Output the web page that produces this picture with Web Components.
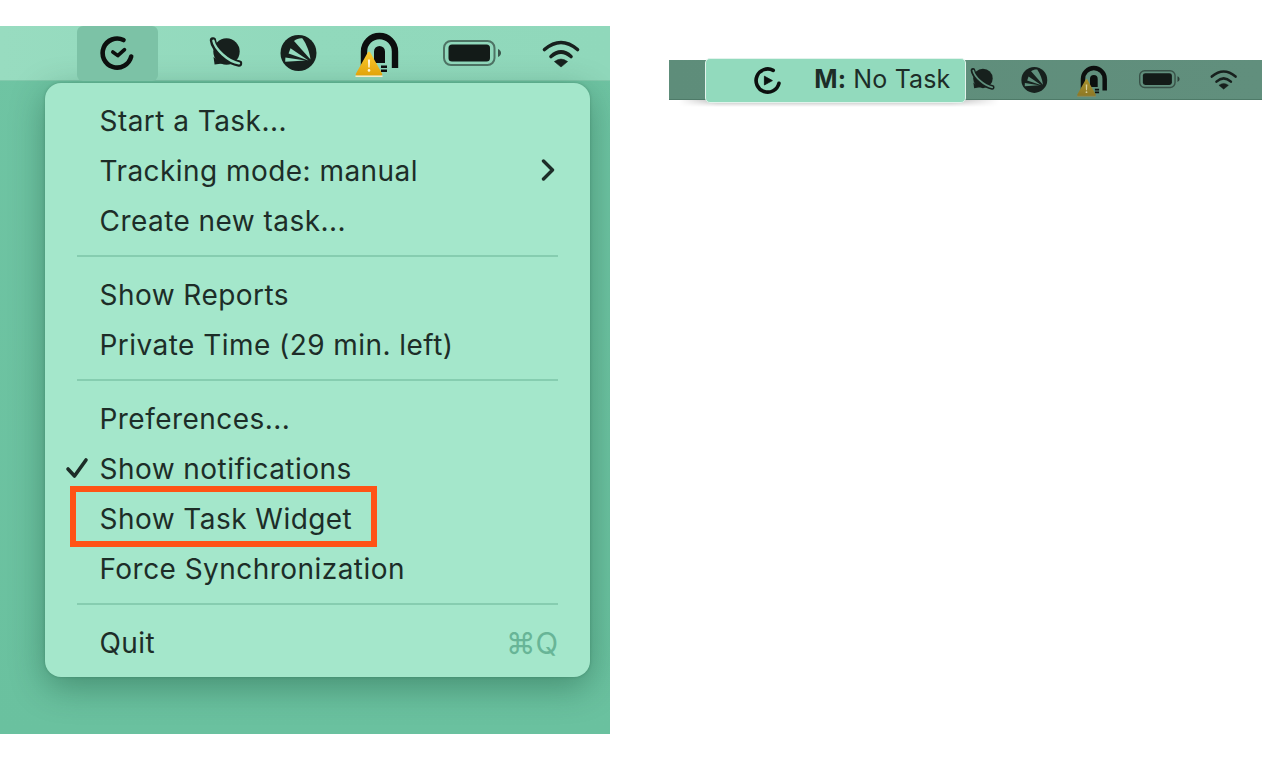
<!DOCTYPE html>
<html lang="en">
<head>
<meta charset="utf-8">
<title>Task widget</title>
<style>
  html, body { margin: 0; background: #fff; }
  body { width: 1270px; height: 760px; overflow: hidden; font-family: Inter, "Liberation Sans", sans-serif; color: #1d2d28; }
  #stage { display: flex; align-items: flex-start; gap: 59px; padding-top: 26px; }
</style>
</head>
<body>
<div id="stage">
  <desktop-panel>
    <menu-bar slot="bar"></menu-bar>
    <app-menu slot="menu">
      <menu-row>Start a Task...</menu-row>
      <menu-row arrow>Tracking mode: manual</menu-row>
      <menu-row>Create new task...</menu-row>
      <menu-sep></menu-sep>
      <menu-row>Show Reports</menu-row>
      <menu-row>Private Time (29 min. left)</menu-row>
      <menu-sep></menu-sep>
      <menu-row>Preferences...</menu-row>
      <menu-row checked>Show notifications</menu-row>
      <menu-row marked>Show Task Widget</menu-row>
      <menu-row>Force Synchronization</menu-row>
      <menu-sep></menu-sep>
      <menu-row shortcut="⌘Q">Quit</menu-row>
    </app-menu>
  </desktop-panel>
  <widget-bar></widget-bar>
</div>

<script>
  const ICONS = {
    tick: {
      w: 34, h: 34,
      svg: `<path d="M23.5 4A14.5 14.5 0 1 0 31.2 20.5" fill="none" stroke="#0c0f0e" stroke-width="4.6" stroke-linecap="round"/>
            <path d="M12.8 16l5 3.6 6.7-6" fill="none" stroke="#0c0f0e" stroke-width="3.6" stroke-linecap="round" stroke-linejoin="round"/>`
    },
    play: {
      w: 34, h: 34,
      svg: `<path d="M24 4.2A14.5 14.5 0 1 0 31.2 20.5" fill="none" stroke="#0c0f0e" stroke-width="4.6" stroke-linecap="round"/>
            <path d="M13 11.5L23 17 13 22.5z" fill="#0c0f0e" stroke="#0c0f0e" stroke-width="1" stroke-linejoin="round"/>`
    },
    planet: {
      w: 34, h: 33,
      svg: `<circle cx="17.5" cy="15.5" r="13.2" fill="#17201d"/>
            <path d="M4.5 21L5.6 28.6 13.5 27.5z" fill="#17201d"/>
            <path d="M4 4.5C5 13 19 26 30 27.5" fill="none" stroke="#17201d" stroke-width="6.4" stroke-linecap="round"/>
            <path d="M4.4 4.8C6 13 19 25.6 30 27.4" fill="none" stroke="var(--gap)" stroke-width="2.4" stroke-linecap="round"/>`
    },
    spark: {
      w: 37, h: 36,
      svg: `<circle cx="18.5" cy="18" r="18" fill="#17201d"/>
            <path d="M30.5 24.5L14 6C16.5 3.8 20 3 22.5 3.4 26.5 9 29.5 17 30.5 24.5z" fill="var(--gap)"/>
            <path d="M28.5 25.5L10.5 13.2 8.6 18.6z" fill="var(--gap)"/>
            <path d="M25.5 25.5L5.4 22.4 5.2 26.8z" fill="var(--gap)"/>`
    },
    lock: {
      w: 46, h: 44,
      svg: `<defs><linearGradient id="warn" x1="0" y1="0" x2="0" y2="1"><stop offset="0" stop-color="var(--warn-a)"/><stop offset="1" stop-color="var(--warn-b)"/></linearGradient></defs>
            <path d="M10 36V18.5a15.5 15.5 0 0 1 31 0V35" fill="none" stroke="#0c0f0e" stroke-width="6.4"/>
            <path d="M20 30V18.5a5.5 5.5 0 0 1 11 0V30z" fill="#0c0f0e"/>
            <path d="M27 32.5h6v2.4h-6zM27 36.5h6v2.4h-6z" fill="#0c0f0e"/>
            <path d="M15 20L3 41.5h24z" fill="url(#warn)" stroke="url(#warn)" stroke-width="2.6" stroke-linejoin="round"/>
            <path d="M2 43.2h26" fill="none" stroke="var(--warn-edge)" stroke-width="1.4" stroke-linecap="round"/>
            <path d="M13.9 26.5h2.2l-.4 8h-1.4z" fill="var(--warn-mark)"/>
            <circle cx="15" cy="37.4" r="1.3" fill="var(--warn-mark)"/>`
    },
    battery: {
      w: 58, h: 26,
      svg: `<rect x="1" y="1" width="50.5" height="24" rx="7" fill="none" stroke="#17201d" stroke-opacity=".55" stroke-width="2"/>
            <rect x="5.5" y="4.5" width="41.5" height="17" rx="3.5" fill="#131b18"/>
            <path d="M55 9c2 .8 3 2.3 3 4s-1 3.2-3 4z" fill="#17201d" fill-opacity=".7"/>`
    },
    wifi: {
      w: 38, h: 28,
      svg: `<path d="M2.5 10.5Q19-3.5 35.5 10.5" fill="none" stroke="#17201d" stroke-width="3.6" stroke-linecap="round"/>
            <path d="M9 17.5Q19 8.5 29 17.5" fill="none" stroke="#17201d" stroke-width="3.6" stroke-linecap="round"/>
            <path d="M12.4 22.6Q19 17.6 25.6 22.6L19 28z" fill="#17201d" stroke="#17201d" stroke-width=".6" stroke-linejoin="round"/>`
    }
  };

  class TrayIcon extends HTMLElement {
    constructor() {
      super();
      this.attachShadow({ mode: 'open' });
    }

    connectedCallback() {
      const icon = ICONS[this.getAttribute('name')];
      const scale = parseFloat(this.getAttribute('scale') || '1');
      this.shadowRoot.innerHTML = `
        <style>
          :host { display: block; flex: none; line-height: 0; }
          svg { display: block; overflow: visible; }
        </style>
        <svg width="${icon.w * scale}" height="${icon.h * scale}" viewBox="0 0 ${icon.w} ${icon.h}">${icon.svg}</svg>
      `;
    }
  }
  customElements.define('tray-icon', TrayIcon);

  class DesktopPanel extends HTMLElement {
    constructor() {
      super();
      this.attachShadow({ mode: 'open' }).innerHTML = `
        <style>
          :host {
            display: block;
            flex: none;
            width: 610px;
            height: 708px;
            overflow: hidden;
            background: linear-gradient(180deg, #6fc4a3 0%, #6ac19f 100%);
          }
        </style>
        <slot name="bar"></slot>
        <slot name="menu"></slot>
      `;
    }
  }
  customElements.define('desktop-panel', DesktopPanel);

  class MenuBar extends HTMLElement {
    constructor() {
      super();
      this.attachShadow({ mode: 'open' }).innerHTML = `
        <style>
          :host {
            --gap: #93dabd;
            --warn-a: #f9ca2e;
            --warn-b: #e3a50c;
            --warn-edge: #f6ecc4;
            --warn-mark: #fff6d8;
            display: flex;
            align-items: center;
            height: 55px;
            box-sizing: border-box;
            padding-left: 77px;
            background: linear-gradient(90deg, #98dcc0 0%, #91d9bc 50%, #90d8bb 100%);
            border-bottom: 1px solid #82c9ac;
          }
          .active {
            display: flex;
            align-items: center;
            justify-content: center;
            flex: none;
            width: 81px;
            height: 55px;
            border-radius: 6px;
            background: #7cc2a6;
          }
          .tick { margin: -1px 0 0 -1px; }
          .planet { margin-left: 51px; margin-top: -1px; }
          .spark { margin-left: 37px; }
          .lock { margin-left: 37px; margin-top: 3px; }
          .battery { margin-left: 43px; margin-top: -1px; }
          .wifi { margin-left: 41px; margin-top: -1px; }
        </style>
        <div class="active"><tray-icon class="tick" name="tick"></tray-icon></div>
        <tray-icon class="planet" name="planet"></tray-icon>
        <tray-icon class="spark" name="spark"></tray-icon>
        <tray-icon class="lock" name="lock"></tray-icon>
        <tray-icon class="battery" name="battery"></tray-icon>
        <tray-icon class="wifi" name="wifi"></tray-icon>
      `;
    }
  }
  customElements.define('menu-bar', MenuBar);

  class AppMenu extends HTMLElement {
    constructor() {
      super();
      this.attachShadow({ mode: 'open' }).innerHTML = `
        <style>
          :host {
            display: block;
            box-sizing: border-box;
            width: 545px;
            height: 594px;
            margin: 2px 0 0 45px;
            padding: 12px 0 10px;
            border-radius: 16px;
            background: #a4e7cb;
            box-shadow: 0 10px 34px rgba(10, 60, 40, .38), 0 0 3px rgba(10, 60, 40, .25);
          }
        </style>
        <slot></slot>
      `;
    }
  }
  customElements.define('app-menu', AppMenu);

  class MenuRow extends HTMLElement {
    constructor() {
      super();
      this.attachShadow({ mode: 'open' });
    }

    connectedCallback() {
      const shortcut = this.getAttribute('shortcut');
      this.shadowRoot.innerHTML = `
        <style>
          :host {
            display: flex;
            align-items: center;
            position: relative;
            height: 50px;
            box-sizing: border-box;
            padding: 1px 32px 0 54.5px;
            font-size: 28px;
            letter-spacing: 0.45px;
            white-space: nowrap;
          }
          .label { flex: 1; }
          .check { position: absolute; left: 20px; top: 14px; }
          .arrow { display: block; margin: -1px 3px 0 0; }
          .shortcut { color: #68b597; font-size: 29.5px; letter-spacing: 0; }
          .mark {
            position: absolute;
            left: 25px;
            top: -7px;
            width: 307px;
            height: 61px;
            box-sizing: border-box;
            border: 6px solid #ff5316;
          }
        </style>
        ${this.hasAttribute('checked') ? `<svg class="check" width="24" height="22" viewBox="0 0 24 22"><path d="M3 12l6.5 7L21 3" fill="none" stroke="#1d2d28" stroke-width="3.6" stroke-linecap="round" stroke-linejoin="round"/></svg>` : ''}
        <span class="label"><slot></slot></span>
        ${this.hasAttribute('arrow') ? `<svg class="arrow" width="14" height="22" viewBox="0 0 14 22"><path d="M2.5 2l9 9-9 9" fill="none" stroke="#1d2d28" stroke-width="3.4" stroke-linecap="round" stroke-linejoin="round"/></svg>` : ''}
        ${shortcut ? `<span class="shortcut">${shortcut}</span>` : ''}
        ${this.hasAttribute('marked') ? `<div class="mark"></div>` : ''}
      `;
    }
  }
  customElements.define('menu-row', MenuRow);

  class MenuSep extends HTMLElement {
    constructor() {
      super();
      this.attachShadow({ mode: 'open' }).innerHTML = `
        <style>
          :host { display: flex; align-items: center; box-sizing: border-box; height: 24px; padding: 0 32px 2px; }
          div { flex: 1; height: 2px; background: #86cdb0; }
        </style>
        <div></div>
      `;
    }
  }
  customElements.define('menu-sep', MenuSep);

  class WidgetBar extends HTMLElement {
    constructor() {
      super();
      this.attachShadow({ mode: 'open' }).innerHTML = `
        <style>
          :host {
            --gap: #5f8f7c;
            --warn-a: #a8902c;
            --warn-b: #8f7a26;
            --warn-edge: #8f8a55;
            --warn-mark: #d8cf9c;
            display: flex;
            align-items: center;
            position: relative;
            flex: none;
            width: 593px;
            height: 40px;
            margin-top: 34px;
            box-sizing: border-box;
            padding-left: 301px;
            background: linear-gradient(90deg, #5e8d7a 0%, #618f7d 100%);
            border-bottom: 1px solid #4e7a68;
          }
          .spark { margin-left: 26px; }
          .lock { margin-left: 28px; margin-top: 3px; }
          .battery { margin-left: 31px; }
          .wifi { margin-left: 30px; }
          .cast {
            position: absolute;
            left: 10px;
            top: 40px;
            width: 320px;
            height: 7px;
            background: linear-gradient(180deg, rgba(0, 0, 0, .28), rgba(0, 0, 0, 0));
            -webkit-mask-image: linear-gradient(90deg, transparent, #000 12%, #000 85%, transparent);
            mask-image: linear-gradient(90deg, transparent, #000 12%, #000 85%, transparent);
          }
          .widget {
            position: absolute;
            left: 36px;
            top: -2px;
            width: 261px;
            height: 45px;
            box-sizing: border-box;
            display: flex;
            align-items: center;
            padding: 0 0 4px 48px;
            border: 1.5px solid #e2f3ec;
            border-radius: 5px;
            background: #92dabd;
            font-size: 25px;
            letter-spacing: 0.15px;
            white-space: nowrap;
          }
          .widget tray-icon { margin-top: 4px; }
          .widget b { font-weight: 700; margin-left: 33px; }
        </style>
        <div class="cast"></div>
        <div class="widget">
          <tray-icon name="play" scale="0.8"></tray-icon>
          <span><b>M:</b> No Task</span>
        </div>
        <tray-icon class="planet" name="planet" scale="0.74"></tray-icon>
        <tray-icon class="spark" name="spark" scale="0.72"></tray-icon>
        <tray-icon class="lock" name="lock" scale="0.7"></tray-icon>
        <tray-icon class="battery" name="battery" scale="0.7"></tray-icon>
        <tray-icon class="wifi" name="wifi" scale="0.72"></tray-icon>
      `;
    }
  }
  customElements.define('widget-bar', WidgetBar);
</script>
</body>
</html>
